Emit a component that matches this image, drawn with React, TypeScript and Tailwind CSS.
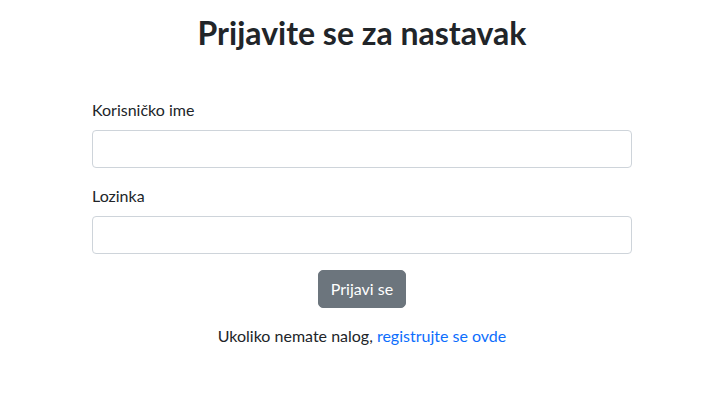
export default function App() {
  return (
    <div className="min-h-screen bg-white pl-[15px] text-[#212529] [font-family:Lato,sans-serif]">
      <div className="mx-auto w-[540px]">
        <h1 className="mt-[14px] text-center text-[32px] font-bold leading-[38px]">
          Prijavite se za nastavak
        </h1>

        <form className="mt-[46px]" onSubmit={(e) => e.preventDefault()}>
          <div className="mb-4">
            <label htmlFor="username" className="mb-2 block text-base leading-6">
              Korisničko ime
            </label>
            <input
              id="username"
              type="text"
              className="block h-[38px] w-full rounded border border-[#ced4da] px-3 text-base outline-none"
            />
          </div>

          <div className="mb-4">
            <label htmlFor="password" className="mb-2 block text-base leading-6">
              Lozinka
            </label>
            <input
              id="password"
              type="password"
              className="block h-[38px] w-full rounded border border-[#ced4da] px-3 text-base outline-none"
            />
          </div>

          <div className="flex justify-center">
            <button
              type="submit"
              className="h-[38px] rounded-[5px] border border-[#6c757d] bg-[#6c757d] px-3 text-base leading-6 text-white"
            >
              Prijavi se
            </button>
          </div>
        </form>

        <p className="mt-4 text-center text-base leading-6">
          Ukoliko nemate nalog,{" "}
          <a href="#" className="text-[#0d6efd]">
            registrujte se ovde
          </a>
        </p>
      </div>
    </div>
  );
}
